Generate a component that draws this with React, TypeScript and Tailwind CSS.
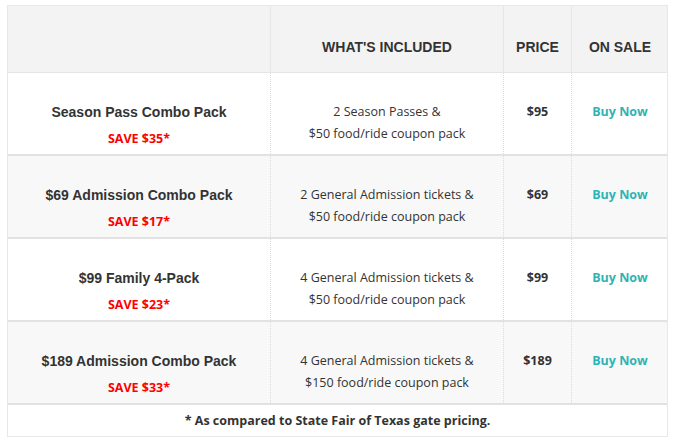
const rows = [
  { name: "Season Pass Combo Pack", save: "SAVE $35*", l1: "2 Season Passes &", l2: "$50 food/ride coupon pack", price: "$95" },
  { name: "$69 Admission Combo Pack", save: "SAVE $17*", l1: "2 General Admission tickets &", l2: "$50 food/ride coupon pack", price: "$69" },
  { name: "$99 Family 4-Pack", save: "SAVE $23*", l1: "4 General Admission tickets &", l2: "$50 food/ride coupon pack", price: "$99" },
  { name: "$189 Admission Combo Pack", save: "SAVE $33*", l1: "4 General Admission tickets &", l2: "$150 food/ride coupon pack", price: "$189" },
]

const sans = "font-['Liberation_Sans',Arial,sans-serif]"
const open = "font-['Open_Sans',sans-serif]"

export default function App() {
  return (
    <div className="w-[676px] h-[446px] bg-white pt-[5px] pl-[7px]">
      <div className="w-[661px] border border-[#e8e8e8] text-[#333]">
        {/* header */}
        <div className={`grid grid-cols-[262px_233px_68px_97px] h-[67px] bg-[#f3f3f3] border-b border-[#e6e6e6] ${sans} font-bold text-[14px]`}>
          <div />
          <div className="flex items-center justify-center pt-[17px] border-l border-[#e6e6e6]">WHAT'S INCLUDED</div>
          <div className="flex items-center justify-center pt-[17px] border-l border-[#e6e6e6]">PRICE</div>
          <div className="flex items-center justify-center pt-[17px] border-l border-[#e6e6e6]">ON SALE</div>
        </div>

        {rows.map((r, i) => (
          <div
            key={r.name}
            className={`grid grid-cols-[262px_233px_68px_97px] h-[83px] border-b-2 border-[#e2e2e2] ${i % 2 ? "bg-[#f8f8f8]" : "bg-white"}`}
          >
            <div className="flex flex-col items-center gap-[7px] pt-[29px]">
              <div className={`${sans} font-bold text-[14px] leading-[20px]`}>{r.name}</div>
              <div className={`${open} font-bold text-[12.5px] leading-[20px] text-[#ff0000]`}>{r.save}</div>
            </div>
            <div className={`flex flex-col items-center border-l border-dotted border-[#dcdcdc] ${open} text-[12.5px] leading-[22px] pt-[28px]`}>
              <div>{r.l1}</div>
              <div>{r.l2}</div>
            </div>
            <div className={`flex justify-center border-l border-dotted border-[#dcdcdc] ${open} font-bold text-[12.5px] leading-[20px] pt-[29px]`}>
              {r.price}
            </div>
            <div className={`flex justify-center border-l border-dotted border-[#dcdcdc] ${open} font-bold text-[12.5px] leading-[20px] pt-[29px] text-[#2db4b4]`}>
              Buy Now
            </div>
          </div>
        ))}

        <div className={`h-[31px] flex items-center justify-center pt-[2px] ${open} font-bold text-[12.5px]`}>
          * As compared to State Fair of Texas gate pricing.
        </div>
      </div>
    </div>
  )
}
